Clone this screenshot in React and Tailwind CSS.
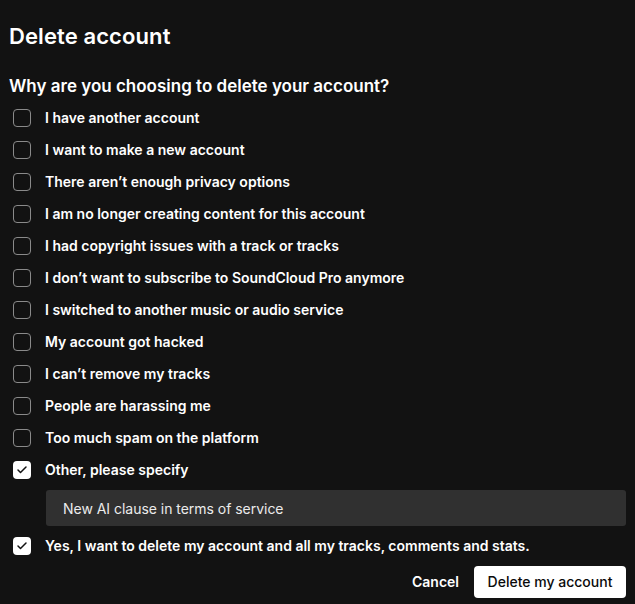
import { Check } from 'lucide-react'

const reasons = [
  { label: 'I have another account' },
  { label: 'I want to make a new account' },
  { label: 'There aren’t enough privacy options' },
  { label: 'I am no longer creating content for this account' },
  { label: 'I had copyright issues with a track or tracks' },
  { label: 'I don’t want to subscribe to SoundCloud Pro anymore' },
  { label: 'I switched to another music or audio service' },
  { label: 'My account got hacked' },
  { label: 'I can’t remove my tracks' },
  { label: 'People are harassing me' },
  { label: 'Too much spam on the platform' },
  { label: 'Other, please specify', checked: true },
]

function CheckRow({ label, checked }) {
  return (
    <div className="flex items-center h-8">
      <div className="w-[18px] h-[18px] ml-[13px] shrink-0">
        {checked ? (
          <div className="w-full h-full rounded-[4px] bg-white flex items-center justify-center">
            <Check size={12} strokeWidth={3} color="#121212" />
          </div>
        ) : (
          <div className="w-full h-full rounded-[4px] border border-[#8a8a8a]" />
        )}
      </div>
      <span className="ml-[14px] text-sm leading-5 font-semibold text-white">{label}</span>
    </div>
  )
}

export default function App() {
  return (
    <div className="w-[635px] h-[604px] overflow-hidden bg-[#121212] text-white font-['Inter',sans-serif]">
      <div className="pl-[9px] pr-[9px]">
        <h1 className="pt-[21px] text-[22px] leading-[30px] font-semibold tracking-[0.1px]">Delete account</h1>
        <h2 className="mt-[23px] text-[17px] leading-6 font-semibold">Why are you choosing to delete your account?</h2>
      </div>
      <div className="mt-[4px]">
        {reasons.map(r => (
          <CheckRow key={r.label} label={r.label} checked={r.checked} />
        ))}
        <div className="ml-[46px] mr-[9px] mt-[4px] h-9 pt-px rounded-[3px] bg-[#303030] flex items-center pl-[17px] pr-[17px] text-sm tracking-[-0.03px] text-[#ebebeb]">
          New AI clause in terms of service
        </div>
        <div className="mt-[4px]">
          <CheckRow label="Yes, I want to delete my account and all my tracks, comments and stats." checked />
        </div>
      </div>
      <div className="flex justify-end items-center mr-[9px] mt-[4px]">
        <button className="text-sm font-semibold text-white mr-[15px]">Cancel</button>
        <button className="h-8 w-[152px] rounded-[4px] bg-white text-sm font-medium text-[#0a0a0a]">Delete my account</button>
      </div>
    </div>
  )
}
